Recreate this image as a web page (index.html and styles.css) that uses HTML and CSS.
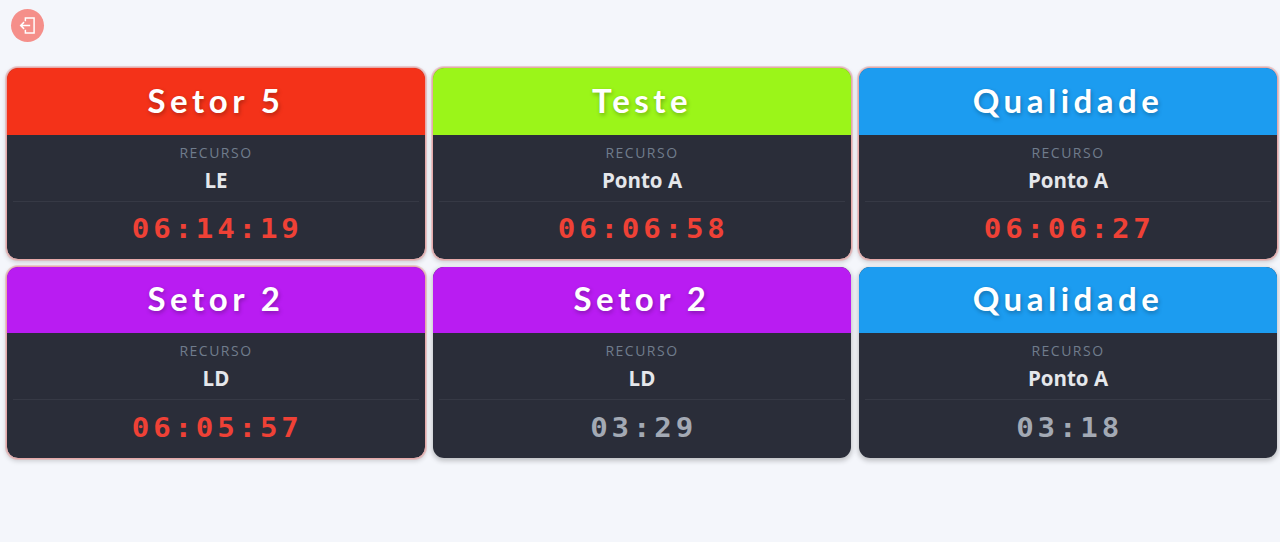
FILE: index.html
```html
<!DOCTYPE html>
<html lang="pt-BR">
<head>
  <meta charset="UTF-8" />
  <title>Painel de Chamados</title>
  <link rel="stylesheet" href="styles.css">
</head>
<body>
  <div class="top-bar">
    <button class="logout-button" aria-label="Sair">
      <svg viewBox="0 0 16 16" width="17" height="17" fill="none" stroke="#fff" stroke-width="1.4">
        <path d="M6 4V1h8.2v14H6v-3"/>
        <path d="M10.5 8H1.6M4.8 4.8 1.6 8l3.2 3.2"/>
      </svg>
    </button>
  </div>

  <div class="card-grid">
    <div class="card late">
      <div class="card-header red">Setor 5</div>
      <div class="card-body">
        <div class="label">RECURSO</div>
        <div class="value">LE</div>
        <div class="timer"><span>06:14:19</span></div>
      </div>
    </div>
    <div class="card late">
      <div class="card-header green">Teste</div>
      <div class="card-body">
        <div class="label">RECURSO</div>
        <div class="value">Ponto A</div>
        <div class="timer"><span>06:06:58</span></div>
      </div>
    </div>
    <div class="card late">
      <div class="card-header blue">Qualidade</div>
      <div class="card-body">
        <div class="label">RECURSO</div>
        <div class="value">Ponto A</div>
        <div class="timer"><span>06:06:27</span></div>
      </div>
    </div>
    <div class="card late">
      <div class="card-header purple">Setor 2</div>
      <div class="card-body">
        <div class="label">RECURSO</div>
        <div class="value">LD</div>
        <div class="timer"><span>06:05:57</span></div>
      </div>
    </div>
    <div class="card">
      <div class="card-header purple">Setor 2</div>
      <div class="card-body">
        <div class="label">RECURSO</div>
        <div class="value">LD</div>
        <div class="timer"><span>03:29</span></div>
      </div>
    </div>
    <div class="card">
      <div class="card-header blue">Qualidade</div>
      <div class="card-body">
        <div class="label">RECURSO</div>
        <div class="value">Ponto A</div>
        <div class="timer"><span>03:18</span></div>
      </div>
    </div>
  </div>
</body>
</html>
```

FILE: styles.css
```css
body {
  margin: 0;
  height: 542px;
  overflow: hidden;
  background: #f4f6fb;
  font-family: "Open Sans", sans-serif;
}

.top-bar {
  height: 67px;
  padding: 9px 0 0 11px;
  box-sizing: border-box;
}

.logout-button {
  width: 33px;
  height: 33px;
  padding: 0;
  border: none;
  border-radius: 50%;
  background: #f58f8a;
  display: flex;
  align-items: center;
  justify-content: center;
}

.card-grid {
  display: grid;
  grid-template-columns: repeat(3, 420px);
  grid-auto-rows: 193px;
  column-gap: 6px;
  row-gap: 5.5px;
  padding: 0 3px 0 6px;
}

.card {
  border-radius: 12px;
  overflow: hidden;
  border: 1px solid transparent;
  background-clip: padding-box;
  display: flex;
  flex-direction: column;
  box-shadow: 0 2px 5px rgba(0, 0, 0, 0.22);
  background-color: #2a2d39;
}

.card.late {
  border-color: #e6a9a9;
  box-shadow: 0 0 0 1px rgba(226, 170, 170, 0.55), 0 2px 5px rgba(0, 0, 0, 0.18);
}

.card-header {
  height: 66.5px;
  flex: none;
  display: flex;
  align-items: center;
  justify-content: center;
  padding-bottom: 3px;
  box-sizing: border-box;
  color: #fff;
  font-family: Lato, sans-serif;
  font-size: 33px;
  font-weight: 700;
  letter-spacing: 4.5px;
  text-shadow: 1px 2px 4px rgba(0, 0, 0, 0.28);
}

.red { background: #f43219; }
.green { background: #9bf519; }
.blue { background: #1c9cf0; }
.purple { background: #b91cf2; }

.card-body {
  flex: 1;
  display: flex;
  flex-direction: column;
  align-items: center;
  padding-top: 9px;
}

.label {
  font-size: 14px;
  line-height: 18px;
  letter-spacing: 1.5px;
  color: #707c8c;
}

.value {
  font-size: 20.5px;
  line-height: 24px;
  margin-top: 6px;
  font-weight: 700;
  color: #e5e7eb;
}

.timer {
  align-self: stretch;
  margin: 9px 6px 0;
  padding-top: 9.5px;
  border-top: 1px solid #363945;
  text-align: center;
  font-family: "DejaVu Sans Mono", monospace;
  font-size: 26px;
  line-height: 36px;
  font-weight: 700;
  letter-spacing: 3.4px;
  color: #a3a9b4;
}

.timer span {
  display: inline-block;
  margin-left: 3px;
  transform: scaleX(1.12);
}

.late .timer {
  color: #ef4136;
}
```
